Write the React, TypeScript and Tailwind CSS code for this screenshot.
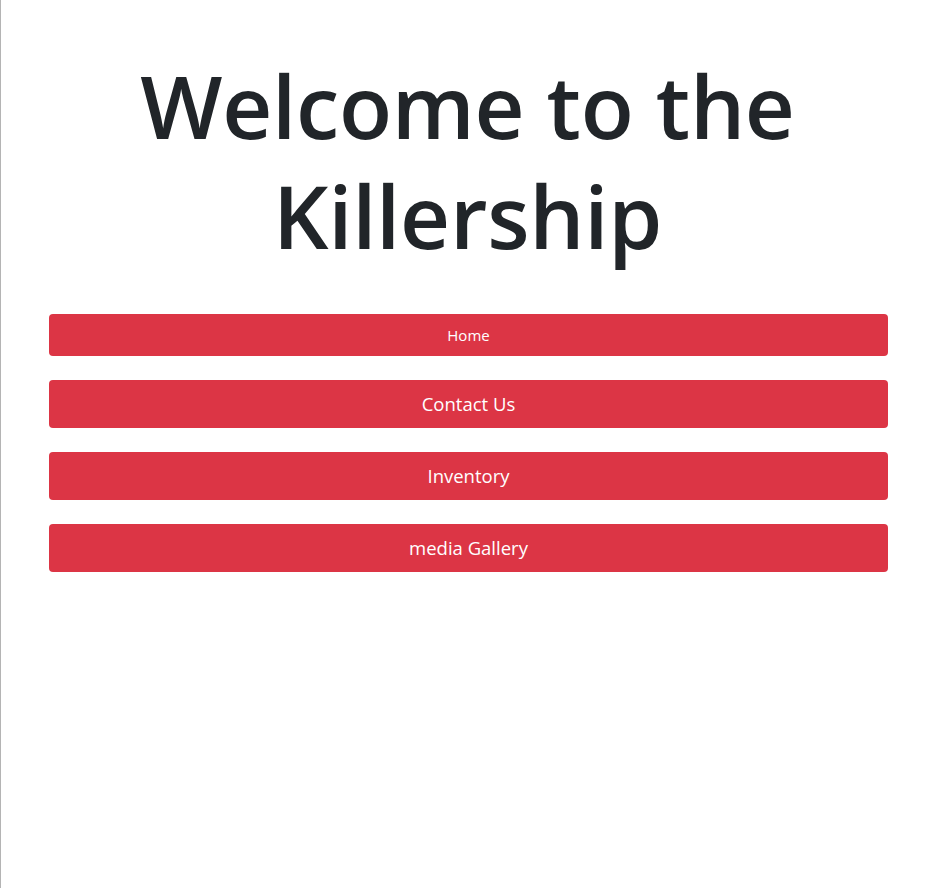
import React from "react";

export default function App() {
  const font = { fontFamily: '"Open Sans", "Noto Sans", sans-serif' };
  return (
    <div className="min-h-[888px] w-full border-l border-[#b4b4b4] bg-white text-[#212529]" style={font}>
      <h1 className="pt-[50px] text-center text-[87px] font-semibold leading-[110px] tracking-[-0.3px]">
        Welcome to the
        <br />
        Killership
      </h1>
      <div className="mt-[44px] flex flex-col gap-[24px] pl-[48px] pr-[46px]">
        <button className="h-[42px] w-full rounded-[4px] bg-[#dc3545] text-[15px] text-white">Home</button>
        <button className="h-[48px] w-full rounded-[4px] bg-[#dc3545] text-[18.5px] text-white">Contact Us</button>
        <button className="h-[48px] w-full rounded-[4px] bg-[#dc3545] text-[18.5px] text-white">Inventory</button>
        <button className="h-[48px] w-full rounded-[4px] bg-[#dc3545] text-[18.5px] text-white">media Gallery</button>
      </div>
    </div>
  );
}
